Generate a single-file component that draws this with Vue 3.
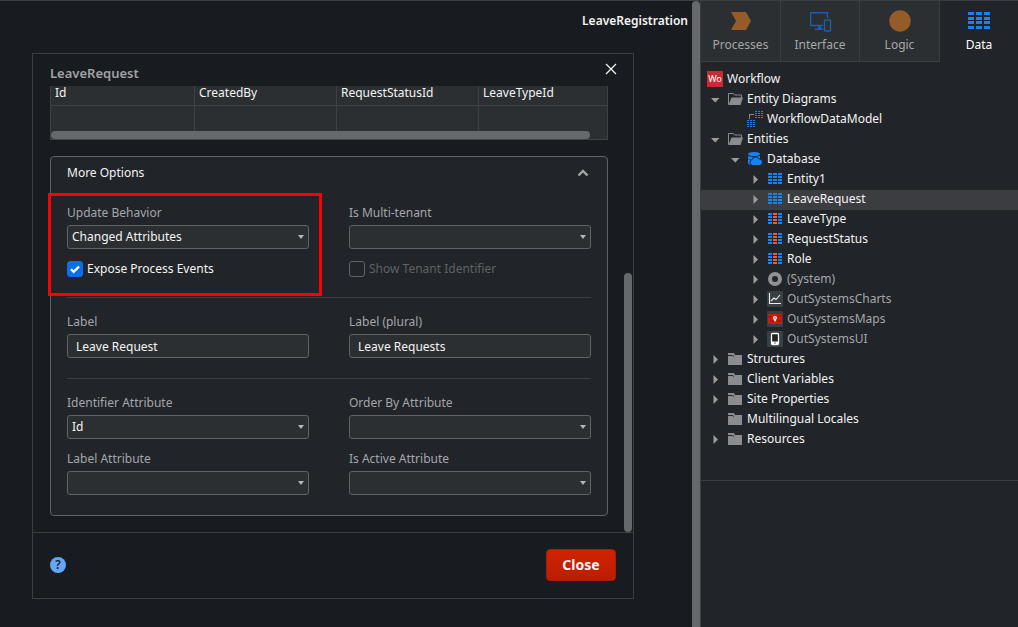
<script setup>
import { ref } from 'vue'

const tabs = ['Processes', 'Interface', 'Logic', 'Data']
const activeTab = ref('Data')

const columns = ['Id', 'CreatedBy', 'RequestStatusId', 'LeaveTypeId']

const updateBehavior = ref('Changed Attributes')
const exposeEvents = ref(true)
const multiTenant = ref('')
const label = ref('Leave Request')
const labelPlural = ref('Leave Requests')
const identifier = ref('Id')
const orderBy = ref('')
const labelAttribute = ref('')
const activeAttribute = ref('')

const selected = ref('LeaveRequest')
const nodes = [
  { name: 'Workflow', depth: 0, icon: 'module', root: true },
  { name: 'Entity Diagrams', depth: 0, icon: 'open', state: 'open' },
  { name: 'WorkflowDataModel', depth: 1, icon: 'diagram' },
  { name: 'Entities', depth: 0, icon: 'open', state: 'open' },
  { name: 'Database', depth: 1, icon: 'database', state: 'open' },
  { name: 'Entity1', depth: 2, icon: 'entity', state: 'closed' },
  { name: 'LeaveRequest', depth: 2, icon: 'entity', state: 'closed' },
  { name: 'LeaveType', depth: 2, icon: 'static', state: 'closed' },
  { name: 'RequestStatus', depth: 2, icon: 'static', state: 'closed' },
  { name: 'Role', depth: 2, icon: 'static', state: 'closed' },
  { name: '(System)', depth: 2, icon: 'system', state: 'closed', dim: true },
  { name: 'OutSystemsCharts', depth: 2, icon: 'charts', state: 'closed', dim: true },
  { name: 'OutSystemsMaps', depth: 2, icon: 'maps', state: 'closed', dim: true },
  { name: 'OutSystemsUI', depth: 2, icon: 'phone', state: 'closed', dim: true },
  { name: 'Structures', depth: 0, icon: 'folder', state: 'closed' },
  { name: 'Client Variables', depth: 0, icon: 'folder', state: 'closed' },
  { name: 'Site Properties', depth: 0, icon: 'folder', state: 'closed' },
  { name: 'Multilingual Locales', depth: 0, icon: 'folder' },
  { name: 'Resources', depth: 0, icon: 'folder', state: 'closed' }
]
</script>

<template>
  <div class="app">
    <main class="canvas">
      <div class="workspace">
        <header class="crumb">LeaveRegistration</header>

        <section class="dialog" role="dialog" aria-labelledby="dialog-title">
          <header class="dialog-head">
            <h1 id="dialog-title">LeaveRequest</h1>
            <button class="x" type="button" aria-label="Close dialog">
              <svg width="12" height="12" viewBox="0 0 12 12"><path d="M1 1l10 10M11 1L1 11" stroke="#f2f2f2" stroke-width="1.3" /></svg>
            </button>
          </header>

          <div class="dialog-body">
            <div class="content">
              <div class="records">
                <table>
                  <thead>
                    <tr><th v-for="c in columns" :key="c">{{ c }}</th></tr>
                  </thead>
                  <tbody>
                    <tr><td v-for="c in columns" :key="c"></td></tr>
                  </tbody>
                </table>
                <div class="hbar"><i></i></div>
              </div>

              <div class="card">
                <button class="card-head" type="button" aria-expanded="true">
                  <span>More Options</span>
                  <svg width="12" height="8" viewBox="0 0 12 8"><path d="M1.5 6.5L6 2l4.5 4.5" fill="none" stroke="#a4a6a8" stroke-width="2.4" /></svg>
                </button>

                <div class="section first">
                  <div class="col marked">
                    <label for="update">Update Behavior</label>
                    <div class="select">
                      <select id="update" v-model="updateBehavior">
                        <option>Changed Attributes</option>
                        <option>Entire Record</option>
                      </select>
                      <svg width="6" height="4" viewBox="0 0 6 4"><path d="M0 0h6L3 4z" /></svg>
                    </div>
                    <label class="check" for="expose">
                      <input id="expose" v-model="exposeEvents" type="checkbox" />
                      <svg v-if="exposeEvents" width="16" height="16" viewBox="0 0 16 16"><path d="M4 8.2l2.7 2.7L12 5.5" fill="none" stroke="#fff" stroke-width="2.3" /></svg>
                      Expose Process Events
                    </label>
                    <div class="marker"></div>
                  </div>
                  <div class="col">
                    <label for="tenant">Is Multi-tenant</label>
                    <div class="select">
                      <select id="tenant" v-model="multiTenant">
                        <option value=""></option>
                        <option>Yes</option>
                        <option>No</option>
                      </select>
                      <svg width="6" height="4" viewBox="0 0 6 4"><path d="M0 0h6L3 4z" /></svg>
                    </div>
                    <label class="check disabled" for="show">
                      <input id="show" type="checkbox" disabled />
                      Show Tenant Identifier
                    </label>
                  </div>
                </div>

                <div class="section">
                  <div class="col">
                    <label for="label">Label</label>
                    <input id="label" v-model="label" class="text" type="text" />
                  </div>
                  <div class="col">
                    <label for="plural">Label (plural)</label>
                    <input id="plural" v-model="labelPlural" class="text" type="text" />
                  </div>
                </div>

                <div class="section">
                  <div class="col">
                    <label for="ident">Identifier Attribute</label>
                    <div class="select">
                      <select id="ident" v-model="identifier"><option>Id</option></select>
                      <svg width="6" height="4" viewBox="0 0 6 4"><path d="M0 0h6L3 4z" /></svg>
                    </div>
                  </div>
                  <div class="col">
                    <label for="order">Order By Attribute</label>
                    <div class="select">
                      <select id="order" v-model="orderBy"><option value=""></option></select>
                      <svg width="6" height="4" viewBox="0 0 6 4"><path d="M0 0h6L3 4z" /></svg>
                    </div>
                  </div>
                  <div class="col">
                    <label for="lattr">Label Attribute</label>
                    <div class="select">
                      <select id="lattr" v-model="labelAttribute"><option value=""></option></select>
                      <svg width="6" height="4" viewBox="0 0 6 4"><path d="M0 0h6L3 4z" /></svg>
                    </div>
                  </div>
                  <div class="col">
                    <label for="active">Is Active Attribute</label>
                    <div class="select">
                      <select id="active" v-model="activeAttribute"><option value=""></option></select>
                      <svg width="6" height="4" viewBox="0 0 6 4"><path d="M0 0h6L3 4z" /></svg>
                    </div>
                  </div>
                </div>
              </div>
            </div>
            <div class="vbar"><i></i></div>
          </div>

          <footer>
            <button class="help" type="button" aria-label="Help">?</button>
            <button class="close" type="button">Close</button>
          </footer>
        </section>
      </div>
      <div class="page-bar"></div>
    </main>

    <aside>
      <nav>
        <button v-for="t in tabs" :key="t" type="button" :class="{ active: t === activeTab }" @click="activeTab = t">
          <svg v-if="t === 'Processes'" width="24" height="24" viewBox="0 0 24 24"><path d="M2 3h15l5 9-5 9H2l5-9z" fill="#955c2a" /></svg>
          <svg v-else-if="t === 'Interface'" width="24" height="24" viewBox="0 0 24 24" fill="none" stroke="#1e5ea5" stroke-width="1.4">
            <path d="M19.5 9V3.700H2.700v12.800h12.500" />
            <path d="M10 16.500h3v3h2v1.500H7v-1.500h3z" fill="#1e5ea5" stroke="none" />
            <rect x="16.5" y="11" width="6" height="11" rx="1" />
          </svg>
          <svg v-else-if="t === 'Logic'" width="24" height="24" viewBox="0 0 24 24"><circle cx="12" cy="12" r="10.7" fill="#955c2a" /></svg>
          <svg v-else width="24" height="24" viewBox="0 0 24 24" fill="#1683f5" shape-rendering="crispEdges">
            <template v-for="y in [3, 8, 12, 17]" :key="y">
              <rect x="1" :y="y" width="6" height="3" />
              <rect x="9" :y="y" width="6" height="3" />
              <rect x="17" :y="y" width="6" height="3" />
            </template>
          </svg>
          <span>{{ t }}</span>
        </button>
      </nav>

      <ul role="tree">
        <li
          v-for="n in nodes"
          :key="n.name"
          role="treeitem"
          :class="['depth' + n.depth, { selected: n.name === selected, dim: n.dim }]"
          @click="selected = n.name"
        >
          <span v-if="!n.root" class="toggle">
            <svg v-if="n.state" width="16" height="16" viewBox="0 0 16 16" fill="#9d9b98">
              <path v-if="n.state === 'open'" d="M4 7h8.500L8.250 11.500z" />
              <path v-else d="M6.500 4v9l4.500-4.500z" />
            </svg>
          </span>
          <svg class="icon" width="16" height="16" viewBox="0 0 16 16">
            <template v-if="n.icon === 'module'">
              <rect width="16" height="16" fill="#cb2a30" />
              <text x="8" y="11" class="wo" text-anchor="middle">Wo</text>
            </template>
            <template v-else-if="n.icon === 'open'">
              <path d="M1.500 13.500v-11h5l1 1.500h7v3" fill="none" stroke="#8a8c8f" />
              <path d="M4.500 6.500H16L13.500 14H1.500z" fill="#8a8c8f" />
            </template>
            <template v-else-if="n.icon === 'folder'">
              <path d="M1 2h6l1 2h7v10H1z" fill="#8a8c8f" />
              <path d="M1 4.500h4.500l1.500 1" fill="none" stroke="#212429" />
            </template>
            <g v-else-if="n.icon === 'diagram'" shape-rendering="crispEdges">
              <path d="M2.500 8V3.500H7" fill="none" stroke="#8a8c8f" />
              <g fill="#1683f5">
                <template v-for="y in [0, 2, 4, 6]" :key="y">
                  <path :d="`M8 ${y}h2v1H8zM11 ${y}h2v1h-2zM14 ${y}h2v1h-2z`" />
                  <path :d="`M0 ${y + 9}h2v1H0zM3 ${y + 9}h2v1H3zM6 ${y + 9}h2v1H6z`" />
                </template>
              </g>
            </g>
            <g v-else-if="n.icon === 'database'" fill="#1683f5">
              <ellipse cx="7" cy="3" rx="6" ry="2" />
              <path d="M1 4.800c2 1.500 10 1.500 12 0v3.200H1z" />
              <path d="M1 8.500v4c1 1.200 2.500 1.500 4 1.500V8.500z" />
              <path d="M5.500 14.500a3 3 0 0 1-.5-5.800 3.800 3.800 0 0 1 7-.7 3.300 3.300 0 0 1 1 6.500z" stroke="#212429" />
            </g>
            <g v-else-if="n.icon === 'entity' || n.icon === 'static'" fill="#1683f5" shape-rendering="crispEdges">
              <template v-for="y in [2, 5, 8, 11]" :key="y">
                <rect x="1" :y="y" width="4" height="2" />
                <rect x="6" :y="y" width="4" height="2" :class="{ orange: n.icon === 'static' }" />
                <rect x="11" :y="y" width="4" height="2" />
              </template>
            </g>
            <circle v-else-if="n.icon === 'system'" cx="8" cy="8" r="5" fill="none" stroke="#8f9193" stroke-width="4" />
            <template v-else-if="n.icon === 'charts'">
              <rect width="16" height="16" rx="1" fill="#384043" />
              <path d="M2.500 2v10.500H14M4 10l3-3 2 1.500 4-4.500" fill="none" stroke="#eee" stroke-width="1.100" />
            </template>
            <template v-else-if="n.icon === 'maps'">
              <rect width="16" height="16" rx="1" fill="#384043" />
              <path d="M1 3h14v10H1z" fill="#c81e05" />
              <path d="M1 6h4M11 5h4M3 10h3M10 10h4" stroke="#8c1707" />
              <path d="M8 11L6 7a2 2 0 1 1 4 0z" fill="#fff" />
              <circle cx="8" cy="7" r=".8" fill="#c81e05" />
            </template>
            <template v-else>
              <rect width="16" height="16" rx="1" fill="#384043" />
              <rect x="4.500" y="2.500" width="7" height="11" rx="1" fill="#222" stroke="#fff" stroke-width="1.300" />
              <path d="M4 10.500h8V13H4z" fill="#fff" />
              <circle cx="8" cy="12" r=".7" fill="#333" />
            </template>
          </svg>
          <span>{{ n.name }}</span>
        </li>
      </ul>
    </aside>
  </div>
</template>

<style>
body {
  background: #181b1f;
}
</style>

<style scoped>
* {
  box-sizing: border-box;
}
button,
input,
select {
  font: inherit;
  color: inherit;
  margin: 0;
  border: 0;
  padding: 0;
  background: none;
}
.app {
  display: flex;
  min-height: 100vh;
  border-top: 1px solid #3b3e41;
  background: #181b1f;
  color: #f4f4f4;
  font: 12px/18px "Noto Sans", sans-serif;
}
.canvas {
  flex: 1;
  display: flex;
  min-width: 0;
}
.workspace {
  flex: 1;
  min-width: 0;
}
.page-bar {
  width: 8px;
  border-radius: 4px 4px 0 0;
  background: #66696b;
}
.crumb {
  height: 52px;
  padding: 11px 4px 0;
  text-align: right;
  font-weight: 600;
}
.dialog {
  margin: 0 58px 28px 32px;
  border: 1px solid #3b3e41;
}
.dialog-head {
  display: flex;
  justify-content: space-between;
  height: 32px;
  padding: 9px 16px 0 17px;
}
h1 {
  margin: 0;
  font-size: 13px;
  font-weight: 600;
  line-height: 20px;
  color: #a0a2a4;
}
.x {
  width: 12px;
  height: 12px;
}
.x svg,
.select svg,
.icon,
.toggle svg {
  display: block;
}
.dialog-body {
  display: flex;
  border-bottom: 1px solid #3b3e41;
}
.content {
  flex: 1;
  min-width: 0;
  padding: 0 16px 16px 17px;
}
.vbar {
  display: flex;
  flex-direction: column;
  justify-content: flex-end;
  width: 9px;
  padding-right: 1px;
}
.vbar i {
  height: 58%;
  border-radius: 4px;
  background: #66696b;
}
.records {
  border: 1px solid #3f4244;
  border-top: 0;
  background: #2c2f31;
}
table {
  width: 100%;
  table-layout: fixed;
  border-spacing: 0;
}
th {
  width: 142px;
  height: 20px;
  padding: 0 4px 6px;
  border-right: 1px solid #3f4244;
  border-bottom: 1px solid #3f4244;
  text-align: left;
  font-weight: 400;
  line-height: 13px;
}
th:first-child {
  width: 144px;
}
th:last-child {
  width: auto;
}
td {
  height: 25px;
  padding: 0;
  border-right: 1px solid #3f4244;
}
th:last-child,
td:last-child {
  border-right: 0;
}
.hbar {
  height: 8px;
}
.hbar i {
  display: block;
  width: 97%;
  height: 8px;
  border-radius: 4px;
  background: #66696b;
}
.card {
  margin-top: 16px;
  padding: 0 16px;
  border: 1px solid #606365;
  border-radius: 4px;
  background: #212429;
}
.card-head {
  display: flex;
  align-items: center;
  justify-content: space-between;
  width: 100%;
  height: 32px;
  padding-right: 2px;
}
.section {
  display: grid;
  grid-template-columns: 1fr 1fr;
  gap: 11px 40px;
  padding: 15px 0 20px;
  border-top: 1px solid #3b3e41;
}
.section.first {
  border-top: 0;
}
.col {
  min-width: 0;
}
.col label {
  display: block;
  margin-bottom: 3px;
  color: #a5a7a9;
}
.marked {
  position: relative;
}
.marker {
  position: absolute;
  inset: -11px -13px -19px -19px;
  border: 3px solid #fe0000;
  pointer-events: none;
}
.select {
  display: grid;
  align-items: center;
}
.select select,
.text {
  display: block;
  appearance: none;
  width: 100%;
  height: 24px;
  padding: 0 20px 1px 4px;
  border: 1px solid #606365;
  border-radius: 3px;
  background: #2c2f31;
  color: #f4f4f4;
}
.text {
  padding: 0 8px;
}
.select > * {
  grid-area: 1 / 1;
}
.select svg {
  justify-self: end;
  margin-right: 5px;
  fill: #b5b7b8;
  pointer-events: none;
}
.col .check {
  display: grid;
  grid-template-columns: 16px 1fr;
  gap: 4px;
  height: 16px;
  margin: 12px 0 0;
  line-height: 16px;
  color: #f4f4f4;
}
.check input {
  grid-area: 1 / 1;
  appearance: none;
  width: 16px;
  height: 16px;
  border: 1px solid #606365;
  border-radius: 3px;
}
.check input:checked {
  border-color: #0b6fed;
  background: #0b6fed;
}
.check svg {
  grid-area: 1 / 1;
}
.col .check.disabled {
  color: #5f6265;
}
footer {
  display: flex;
  align-items: center;
  justify-content: space-between;
  height: 65px;
  padding: 0 17px 2px;
}
.help {
  width: 16px;
  height: 16px;
  border-radius: 50%;
  background: #64a6f8;
  color: #181b1f;
  font-weight: 600;
  line-height: 16px;
}
.close {
  width: 70px;
  height: 32px;
  border: 1px solid #a91c05;
  border-radius: 4px;
  background: linear-gradient(#d02300, #bb1d00);
  font-size: 14px;
  font-weight: 700;
}
aside {
  width: 318px;
  border-left: 1px solid #3b3e41;
  background: #212429;
}
nav {
  display: grid;
  grid-template-columns: 80px 79px 80px 1fr;
}
nav button {
  display: flex;
  flex-direction: column;
  align-items: center;
  height: 61px;
  padding-top: 8px;
  border-right: 1px solid #3b3e41;
  border-bottom: 1px solid #3b3e41;
  background: #2c2f31;
  color: #a5a7a9;
}
nav button span {
  margin-top: 3px;
}
nav .active {
  border-color: transparent;
  background: none;
  color: #fff;
}
nav button:last-child {
  border-right: 0;
}
ul {
  margin: 0;
  padding: 8px 0 30px;
  list-style: none;
  border-bottom: 1px solid #3b3e41;
}
li {
  display: flex;
  gap: 4px;
  height: 20px;
  padding: 1px 0 1px 6px;
  line-height: 16px;
  white-space: nowrap;
}
.depth1 {
  padding-left: 26px;
}
.depth2 {
  padding-left: 46px;
}
.selected {
  background: #3b3d41;
}
.dim {
  color: #a5a7a9;
}
.toggle {
  width: 16px;
}
.orange {
  fill: #ef5a38;
}
.wo {
  fill: #fff;
  font-size: 9px;
}
</style>
